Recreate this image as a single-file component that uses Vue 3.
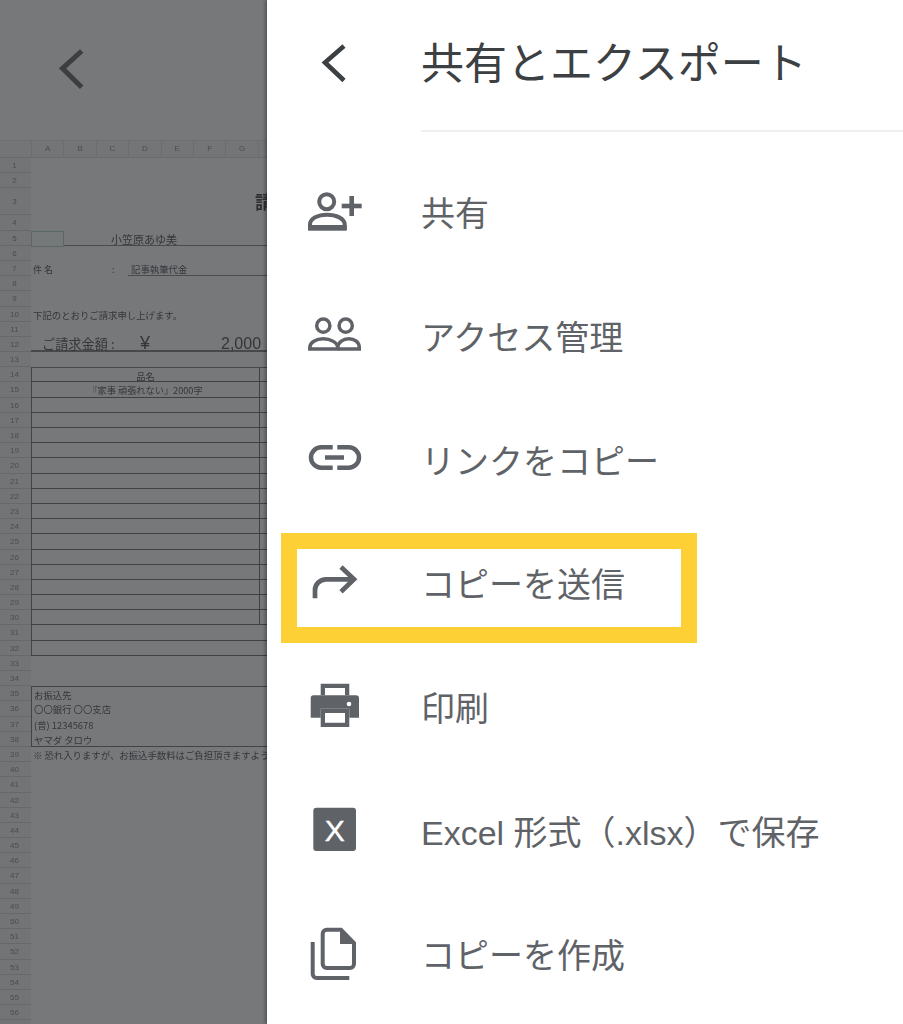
<script setup>
const columns = ['A', 'B', 'C', 'D', 'E', 'F', 'G', '']

const content = {
  3: { cells: [{ t: '請', c: 'c3' }] },
  5: { cls: 'r5', cells: [{ t: '', c: 'c5box' }, { t: '小笠原あゆ美', c: 'c5' }] },
  7: { cells: [{ t: '件 名', c: 'c7a' }, { t: ':', c: 'c7b' }, { t: '記事執筆代金', c: 'c7c' }] },
  10: { cells: [{ t: '下記のとおりご請求申し上げます。', c: 'note' }] },
  12: { cls: 'r12', cells: [{ t: 'ご請求金額', c: 'c12a' }, { t: ':', c: 'c12d' }, { t: '¥', c: 'c12b' }, { t: '2,000', c: 'c12c' }] },
  14: { cls: 'first', name: '品名' },
  15: { name: '『家事 頑張れない』2000字' },
  35: { cls: 'bank bank-top', cells: [{ t: 'お振込先', c: 'note' }] },
  36: { cls: 'bank', cells: [{ t: '〇〇銀行 〇〇支店', c: 'note' }] },
  37: { cls: 'bank', cells: [{ t: '(普) 12345678', c: 'note' }] },
  38: { cls: 'bank bank-end', cells: [{ t: 'ヤマダ タロウ', c: 'note' }] },
  39: { cells: [{ t: '※ 恐れ入りますが、お振込手数料はご負担頂きますよう', c: 'note nowrap' }] }
}

const rows = Array.from({ length: 57 }, (_, i) => {
  const n = i + 1
  const base = content[n] || {}
  const table = n >= 14 && n <= 32
  return {
    n,
    cells: base.cells || [],
    cls: [base.cls, n === 3 ? 'tall' : '', table ? 'tb' : ''],
    table,
    divided: n >= 14 && n <= 30,
    name: base.name || ''
  }
})

const items = [
  { id: 'add', label: '共有' },
  { id: 'people', label: 'アクセス管理' },
  { id: 'link', label: 'リンクをコピー' },
  { id: 'send', label: 'コピーを送信' },
  { id: 'print', label: '印刷' },
  { id: 'excel', label: 'Excel 形式（.xlsx）で保存' },
  { id: 'copy', label: 'コピーを作成' }
]
</script>

<template>
  <div class="screen">
    <section class="doc">
      <header class="doc-head">
        <svg class="doc-back" width="40" height="50" viewBox="0 0 40 50">
          <path d="M26.7 3 L7.5 20.3 L26.7 39.3" />
        </svg>
      </header>
      <div class="sheet">
        <div class="col-head">
          <div class="corner"></div>
          <div v-for="c in columns" :key="c" class="col">{{ c }}</div>
        </div>
        <div v-for="r in rows" :key="r.n" class="row" :class="r.cls">
          <div class="row-head">{{ r.n }}</div>
          <div class="cells">
            <div v-if="r.table" class="name" :class="{ divided: r.divided }">{{ r.name }}</div>
            <span v-for="(c, i) in r.cells" :key="i" :class="c.c">{{ c.t }}</span>
          </div>
        </div>
      </div>
    </section>

    <aside class="drawer">
      <header class="drawer-head">
        <svg class="back" width="40" height="60" viewBox="0 0 40 60">
          <path d="M24 4 L5 20.5 L24 38.5" />
        </svg>
        <h1 class="title">共有とエクスポート</h1>
      </header>
      <ul class="menu">
        <li v-for="item in items" :key="item.id" class="item">
          <svg class="icon" width="60" height="60" viewBox="0 0 60 60">
            <g v-if="item.id === 'add'">
              <circle class="line s4" cx="21.7" cy="18.7" r="7.5" />
              <path class="line s4" d="M5 45 v-3.5 c0-6 8-9.8 17-9.8 s17.7 3.8 17.7 9.8 v3.5 z" />
              <rect class="solid" x="3" y="42" width="38.7" height="5.7" />
              <rect class="solid" x="36.7" y="20.7" width="20" height="4.6" />
              <rect class="solid" x="44.4" y="13" width="4.6" height="20" />
            </g>
            <g v-else-if="item.id === 'people'">
              <circle class="line s35" cx="18.3" cy="18.7" r="6.6" />
              <circle class="line s35" cx="40.7" cy="18.7" r="6.6" />
              <path class="line s35" d="M4.8 42 v-1.5 c0-5.2 6.4-8.7 13.4-8.7 s14.5 3.5 14.5 8.7 v1.5 z" />
              <path class="line s35" d="M32.7 40.5 c0.5-5.2 5.5-8.7 11-8.7 c6 0 10.6 3.5 10.6 8.7 v1.5 h-21.6" />
            </g>
            <g v-else-if="item.id === 'link'">
              <path class="line s45" d="M27.7 17.3 h-11.5 a10.2 10.2 0 0 0 0 20.4 h11.5" />
              <path class="line s45" d="M32.3 17.3 h11.5 a10.2 10.2 0 0 1 0 20.4 h-11.5" />
              <path class="line s45" d="M20 27.5 h19" />
            </g>
            <g v-else-if="item.id === 'send'">
              <path class="line s47" d="M10 44.3 v-8 a11 11 0 0 1 11-11 h27" />
              <path class="line s47" d="M36 13 L49 25.3 L36 37.7" />
            </g>
            <g v-else-if="item.id === 'print'">
              <path class="solid" d="M15.7 5.7 H44.3 V17.3 H40 V10 H20 V17.3 H15.7 Z" />
              <path class="solid" d="M9 17.3 H51 a3 3 0 0 1 3 3 V39.7 H44.3 V30.7 H15.7 V39.7 H5.7 V20.3 a3 3 0 0 1 3.3-3 Z" />
              <path class="solid" fill-rule="evenodd" d="M15.7 30.7 H44.3 V49 H15.7 Z M20 35 V44.7 H40 V35 Z" />
              <circle class="dot" cx="44" cy="26" r="2.3" />
            </g>
            <g v-else-if="item.id === 'excel'">
              <rect class="solid" x="8.3" y="6.7" width="42.7" height="43.3" rx="3" />
              <text class="x" x="29.7" y="40">X</text>
            </g>
            <g v-else>
              <path class="line s4" d="M21.7 4.7 H36 L49 18 V39 a4 4 0 0 1 -4 4 H21.7 a4 4 0 0 1 -4 -4 V8.7 a4 4 0 0 1 4-4 z" />
              <path class="solid" d="M35 3 V19 H51 Z" />
              <path class="line s4" d="M7.7 17 V49 a4 4 0 0 0 4 4 H44.3" />
            </g>
          </svg>
          <span class="label">{{ item.label }}</span>
        </li>
      </ul>
      <div class="mark"></div>
    </aside>
  </div>
</template>

<style>
html, body { margin: 0; background: #fff; }
</style>

<style scoped>
.screen {
  display: flex;
  width: 903px;
  height: 1024px;
  overflow: hidden;
  font-family: "Noto Sans CJK JP", "Liberation Sans", sans-serif;
}
.doc {
  width: 267px;
  flex: none;
  overflow: hidden;
  background: #77787a;
}
.doc-head {
  height: 140px;
  padding: 48px 0 0 55px;
  box-sizing: border-box;
}
.doc-back path {
  fill: none;
  stroke: #3d3e40;
  stroke-width: 5;
}
.sheet {
  width: 300px;
  color: #35363a;
  filter: blur(0.5px);
}
.col-head {
  display: flex;
  height: 17.5px;
  border-top: 1px solid #6d6e70;
  border-bottom: 1px solid #6a6b6d;
  box-sizing: border-box;
  background: #747577;
}
.corner { width: 31px; flex: none; }
.col {
  width: 32.4px;
  flex: none;
  box-sizing: border-box;
  border-left: 1px solid #6c6d6f;
  text-align: center;
  font-size: 8px;
  line-height: 15px;
  color: #4b4c4e;
  font-family: "Liberation Sans", sans-serif;
}
.row {
  display: flex;
  height: 15.2px;
  font-size: 9px;
  line-height: 17px;
}
.row.tall { height: 27.5px; line-height: 27px; }
.row-head {
  width: 31px;
  flex: none;
  box-sizing: border-box;
  padding-right: 2px;
  text-align: center;
  font-size: 8px;
  line-height: 15px;
  color: #4b4c4e;
  background: #737476;
  border-bottom: 1px solid #67686a;
  font-family: "Liberation Sans", sans-serif;
}
.tall .row-head { line-height: 27px; }
.cells {
  flex: 1;
  display: flex;
  min-width: 0;
  box-sizing: border-box;
  white-space: nowrap;
}
.c3 { margin-left: 224px; font-size: 18px; font-weight: 700; color: #2e2f31; }
.r5 .cells { border-bottom: 1.5px solid #4a4b4d; }
.c5box { width: 33px; height: 16.5px; box-sizing: border-box; border: 1px solid #5b685f; background: #76797a; flex: none; }
.c5 { margin-left: 47px; font-size: 11px; }
.c7a { margin-left: 2px; width: 79px; flex: none; }
.c7b { width: 16px; flex: none; }
.c7c { flex: 1; padding-left: 3px; border-bottom: 1.5px solid #4a4b4d; font-size: 9.4px; }
.note { margin-left: 2px; font-size: 9.4px; }
.nowrap { white-space: nowrap; }
.r12 .cells { border-bottom: 2.5px solid #47484a; height: 15.2px; line-height: 13px; }
.c12a { margin-left: 11px; width: 69px; flex: none; font-size: 13.2px; }
.c12d { width: 29px; flex: none; font-size: 13px; }
.c12b { width: 81px; flex: none; font-size: 18px; font-family: "Liberation Sans", sans-serif; }
.c12c { font-size: 16px; font-family: "Liberation Sans", sans-serif; }
.tb .cells { border-left: 1px solid #424345; border-bottom: 1.5px solid #3f4042; }
.first .cells { border-top: 1.5px solid #46474a; }
.name { width: 228px; flex: none; box-sizing: border-box; text-align: center; font-size: 9.2px; }
.name.divided { border-right: 1.5px solid #3f4042; }
.bank .cells { border-left: 1px solid #424345; }
.bank-top .cells { border-top: 1.5px solid #424345; }
.bank-end .cells { border-bottom: 1.5px solid #424345; }

.drawer {
  position: relative;
  flex: 1;
  background: #fff;
  box-shadow: -2px 0 3px rgba(0, 0, 0, 0.3);
}
.drawer-head {
  display: flex;
  align-items: flex-start;
  height: 132px;
  box-sizing: border-box;
  padding-left: 53px;
  padding-top: 42px;
}
.back { flex: none; }
.back path {
  fill: none;
  stroke: #3c4043;
  stroke-width: 4.6;
}
.title {
  margin: -22px 0 0 61px;
  flex: 1;
  height: 112px;
  box-sizing: border-box;
  border-bottom: 2px solid #eff0f0;
  font-size: 43px;
  font-weight: 400;
  line-height: 80px;
  color: #3c4043;
  white-space: nowrap;
}
.menu {
  list-style: none;
  margin: 0;
  padding: 19px 0 0 38px;
}
.item {
  display: flex;
  align-items: center;
  height: 123.7px;
}
.icon { flex: none; }
.label {
  margin-left: 56px;
  margin-top: 3px;
  font-family: "Liberation Sans", "Noto Sans CJK JP", sans-serif;
  font-size: 34px;
  line-height: 44px;
  color: #5f6368;
  white-space: nowrap;
}
.line { fill: none; stroke: #5f6368; }
.s35 { stroke-width: 3.5; }
.s4 { stroke-width: 4; }
.s45 { stroke-width: 4.5; }
.s47 { stroke-width: 4.7; }
.solid { fill: #5f6368; }
.dot { fill: #fff; }
.x {
  fill: #fff;
  stroke: #fff;
  stroke-width: 0.4;
  font-family: "Liberation Sans", sans-serif;
  font-size: 30px;
  text-anchor: middle;
}
.mark {
  position: absolute;
  left: 14px;
  top: 533px;
  width: 416px;
  height: 110px;
  box-sizing: border-box;
  border: 16px solid #fdd035;
}
</style>
